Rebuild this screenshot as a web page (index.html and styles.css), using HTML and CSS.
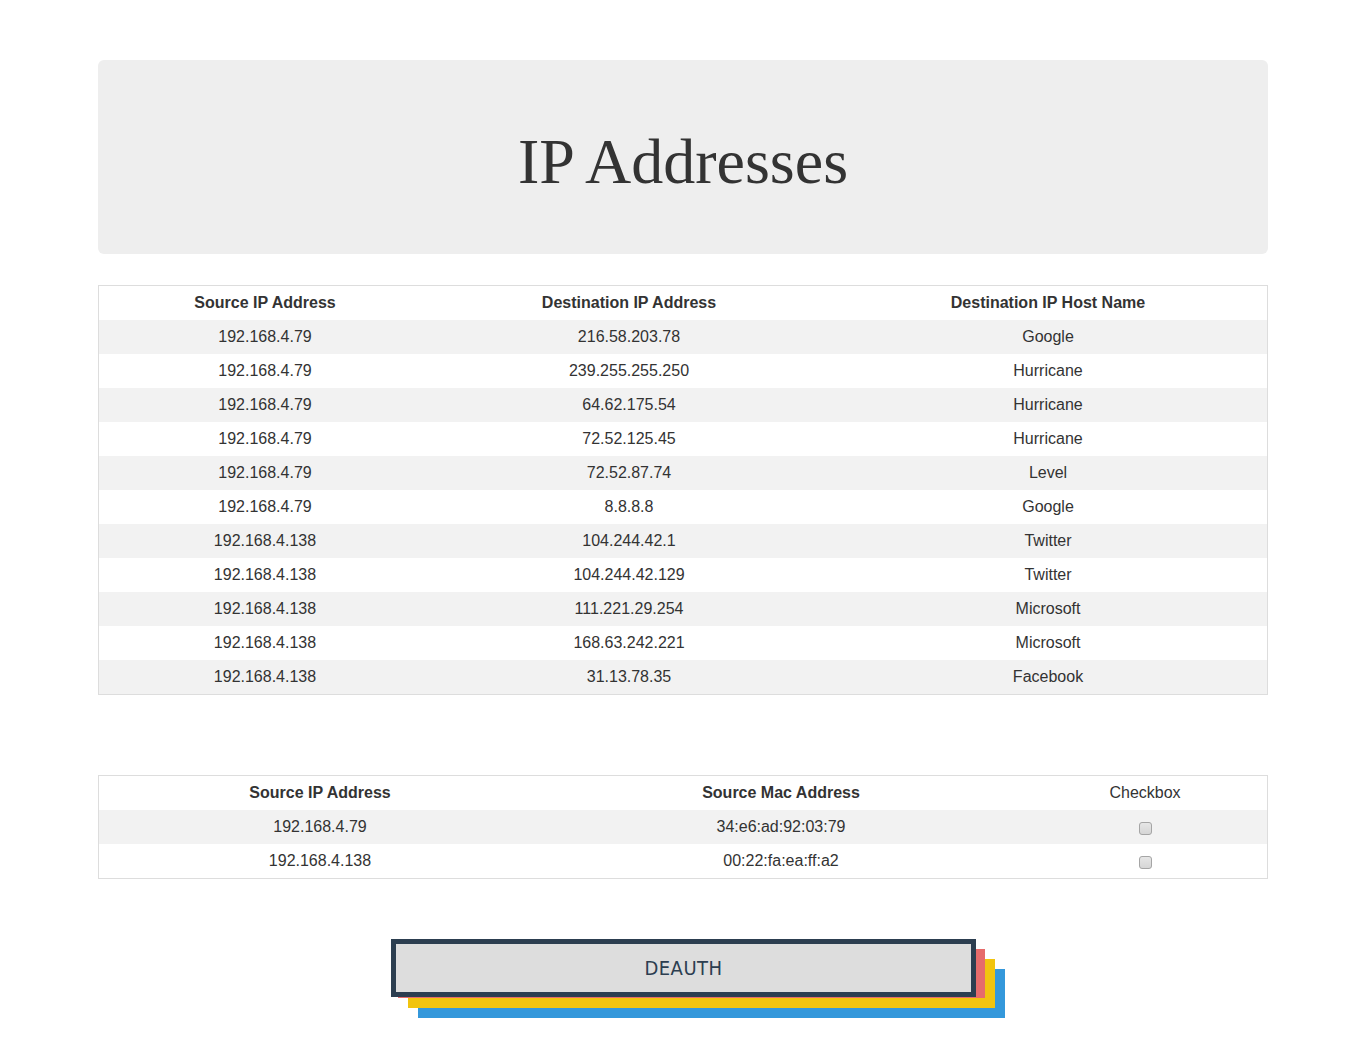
FILE: index.html
```html
<!DOCTYPE html>
<html lang="en">
<head>
<meta charset="utf-8">
<title>IP Addresses</title>
<link rel="stylesheet" href="styles.css">
</head>
<body>
<div class="container">
  <div class="jumbotron">
    <h1 class="title">IP Addresses</h1>
  </div>

  <table class="data data-ip">
    <thead>
      <tr><th class="c1">Source IP Address</th><th class="c2">Destination IP Address</th><th class="c3">Destination IP Host Name</th></tr>
    </thead>
    <tbody>
      <tr><td>192.168.4.79</td><td>216.58.203.78</td><td>Google</td></tr>
      <tr><td>192.168.4.79</td><td>239.255.255.250</td><td>Hurricane</td></tr>
      <tr><td>192.168.4.79</td><td>64.62.175.54</td><td>Hurricane</td></tr>
      <tr><td>192.168.4.79</td><td>72.52.125.45</td><td>Hurricane</td></tr>
      <tr><td>192.168.4.79</td><td>72.52.87.74</td><td>Level</td></tr>
      <tr><td>192.168.4.79</td><td>8.8.8.8</td><td>Google</td></tr>
      <tr><td>192.168.4.138</td><td>104.244.42.1</td><td>Twitter</td></tr>
      <tr><td>192.168.4.138</td><td>104.244.42.129</td><td>Twitter</td></tr>
      <tr><td>192.168.4.138</td><td>111.221.29.254</td><td>Microsoft</td></tr>
      <tr><td>192.168.4.138</td><td>168.63.242.221</td><td>Microsoft</td></tr>
      <tr><td>192.168.4.138</td><td>31.13.78.35</td><td>Facebook</td></tr>
    </tbody>
  </table>

  <table class="data data-mac">
    <thead>
      <tr><th class="m1">Source IP Address</th><th class="m2">Source Mac Address</th><th class="m3 plain">Checkbox</th></tr>
    </thead>
    <tbody>
      <tr><td>192.168.4.79</td><td>34:e6:ad:92:03:79</td><td><input type="checkbox" class="chk"></td></tr>
      <tr><td>192.168.4.138</td><td>00:22:fa:ea:ff:a2</td><td><input type="checkbox" class="chk"></td></tr>
    </tbody>
  </table>

  <div class="action">
    <div class="stack">
      <span class="layer layer-blue"></span>
      <span class="layer layer-yellow"></span>
      <span class="layer layer-red"></span>
      <button class="deauth" type="button">DEAUTH</button>
    </div>
  </div>
</div>
</body>
</html>
```

FILE: styles.css
```css
html, body {
  margin: 0;
  padding: 0;
  background: #ffffff;
}

body {
  font-family: "Liberation Sans", Arial, sans-serif;
  font-size: 16px;
  color: #333333;
}

.container {
  width: 1170px;
  margin: 0 auto;
  padding-top: 60px;
}

.jumbotron {
  background: #eeeeee;
  border-radius: 6px;
  height: 194px;
  box-sizing: border-box;
  padding: 48px 0;
  text-align: center;
}

.title {
  margin: 19px 0 9px;
  font-family: "Liberation Serif", "Times New Roman", serif;
  font-weight: 400;
  font-size: 64px;
  line-height: 70px;
  color: #333333;
}

.data {
  width: 1170px;
  border-collapse: collapse;
  border: 1px solid #dddddd;
  table-layout: fixed;
}

.data-ip {
  margin-top: 31px;
}

.data-mac {
  margin-top: 80px;
}

.data th,
.data td {
  padding: 8px 0;
  line-height: 18px;
  height: 18px;
  text-align: center;
  vertical-align: middle;
}

.data th:last-child,
.data td:last-child {
  padding-left: 2px;
}

.data th {
  font-weight: 700;
}

.data th.plain {
  font-weight: 400;
}

.data tbody tr:nth-child(odd) {
  background: #f2f2f2;
}

.c1 { width: 332px; }
.c2 { width: 396px; }
.c3 { width: auto; }

.m1 { width: 442px; }
.m2 { width: 480px; }
.m3 { width: auto; }

.chk {
  -webkit-appearance: none;
  appearance: none;
  width: 13px;
  height: 13px;
  margin: 2px 0 0 0;
  box-sizing: border-box;
  border: 1px solid #a5a5a5;
  border-radius: 3px;
  background: linear-gradient(#e6e6e6, #d6d6d6);
  vertical-align: middle;
}

.action {
  display: flex;
  justify-content: center;
  padding-top: 60px;
  padding-bottom: 39px;
}

.stack {
  position: relative;
  width: 585px;
  height: 58px;
  margin-left: 1px;
}

.layer {
  position: absolute;
  width: 587px;
  height: 49px;
}

.layer-red {
  left: 7px;
  top: 10px;
  background: #e66b6b;
}

.layer-yellow {
  left: 17px;
  top: 20px;
  background: #f1c40f;
}

.layer-blue {
  left: 27px;
  top: 30px;
  background: #3498db;
}

.deauth {
  position: relative;
  z-index: 1;
  display: block;
  width: 585px;
  height: 58px;
  box-sizing: border-box;
  margin: 0;
  padding: 0;
  border: 5px solid #2c3e50;
  background: #dddddd;
  color: #2c3e50;
  font-family: "DejaVu Sans Condensed", "DejaVu Sans", sans-serif;
  font-stretch: condensed;
  font-size: 20px;
  letter-spacing: 0.5px;
  text-align: center;
  cursor: pointer;
}
```
